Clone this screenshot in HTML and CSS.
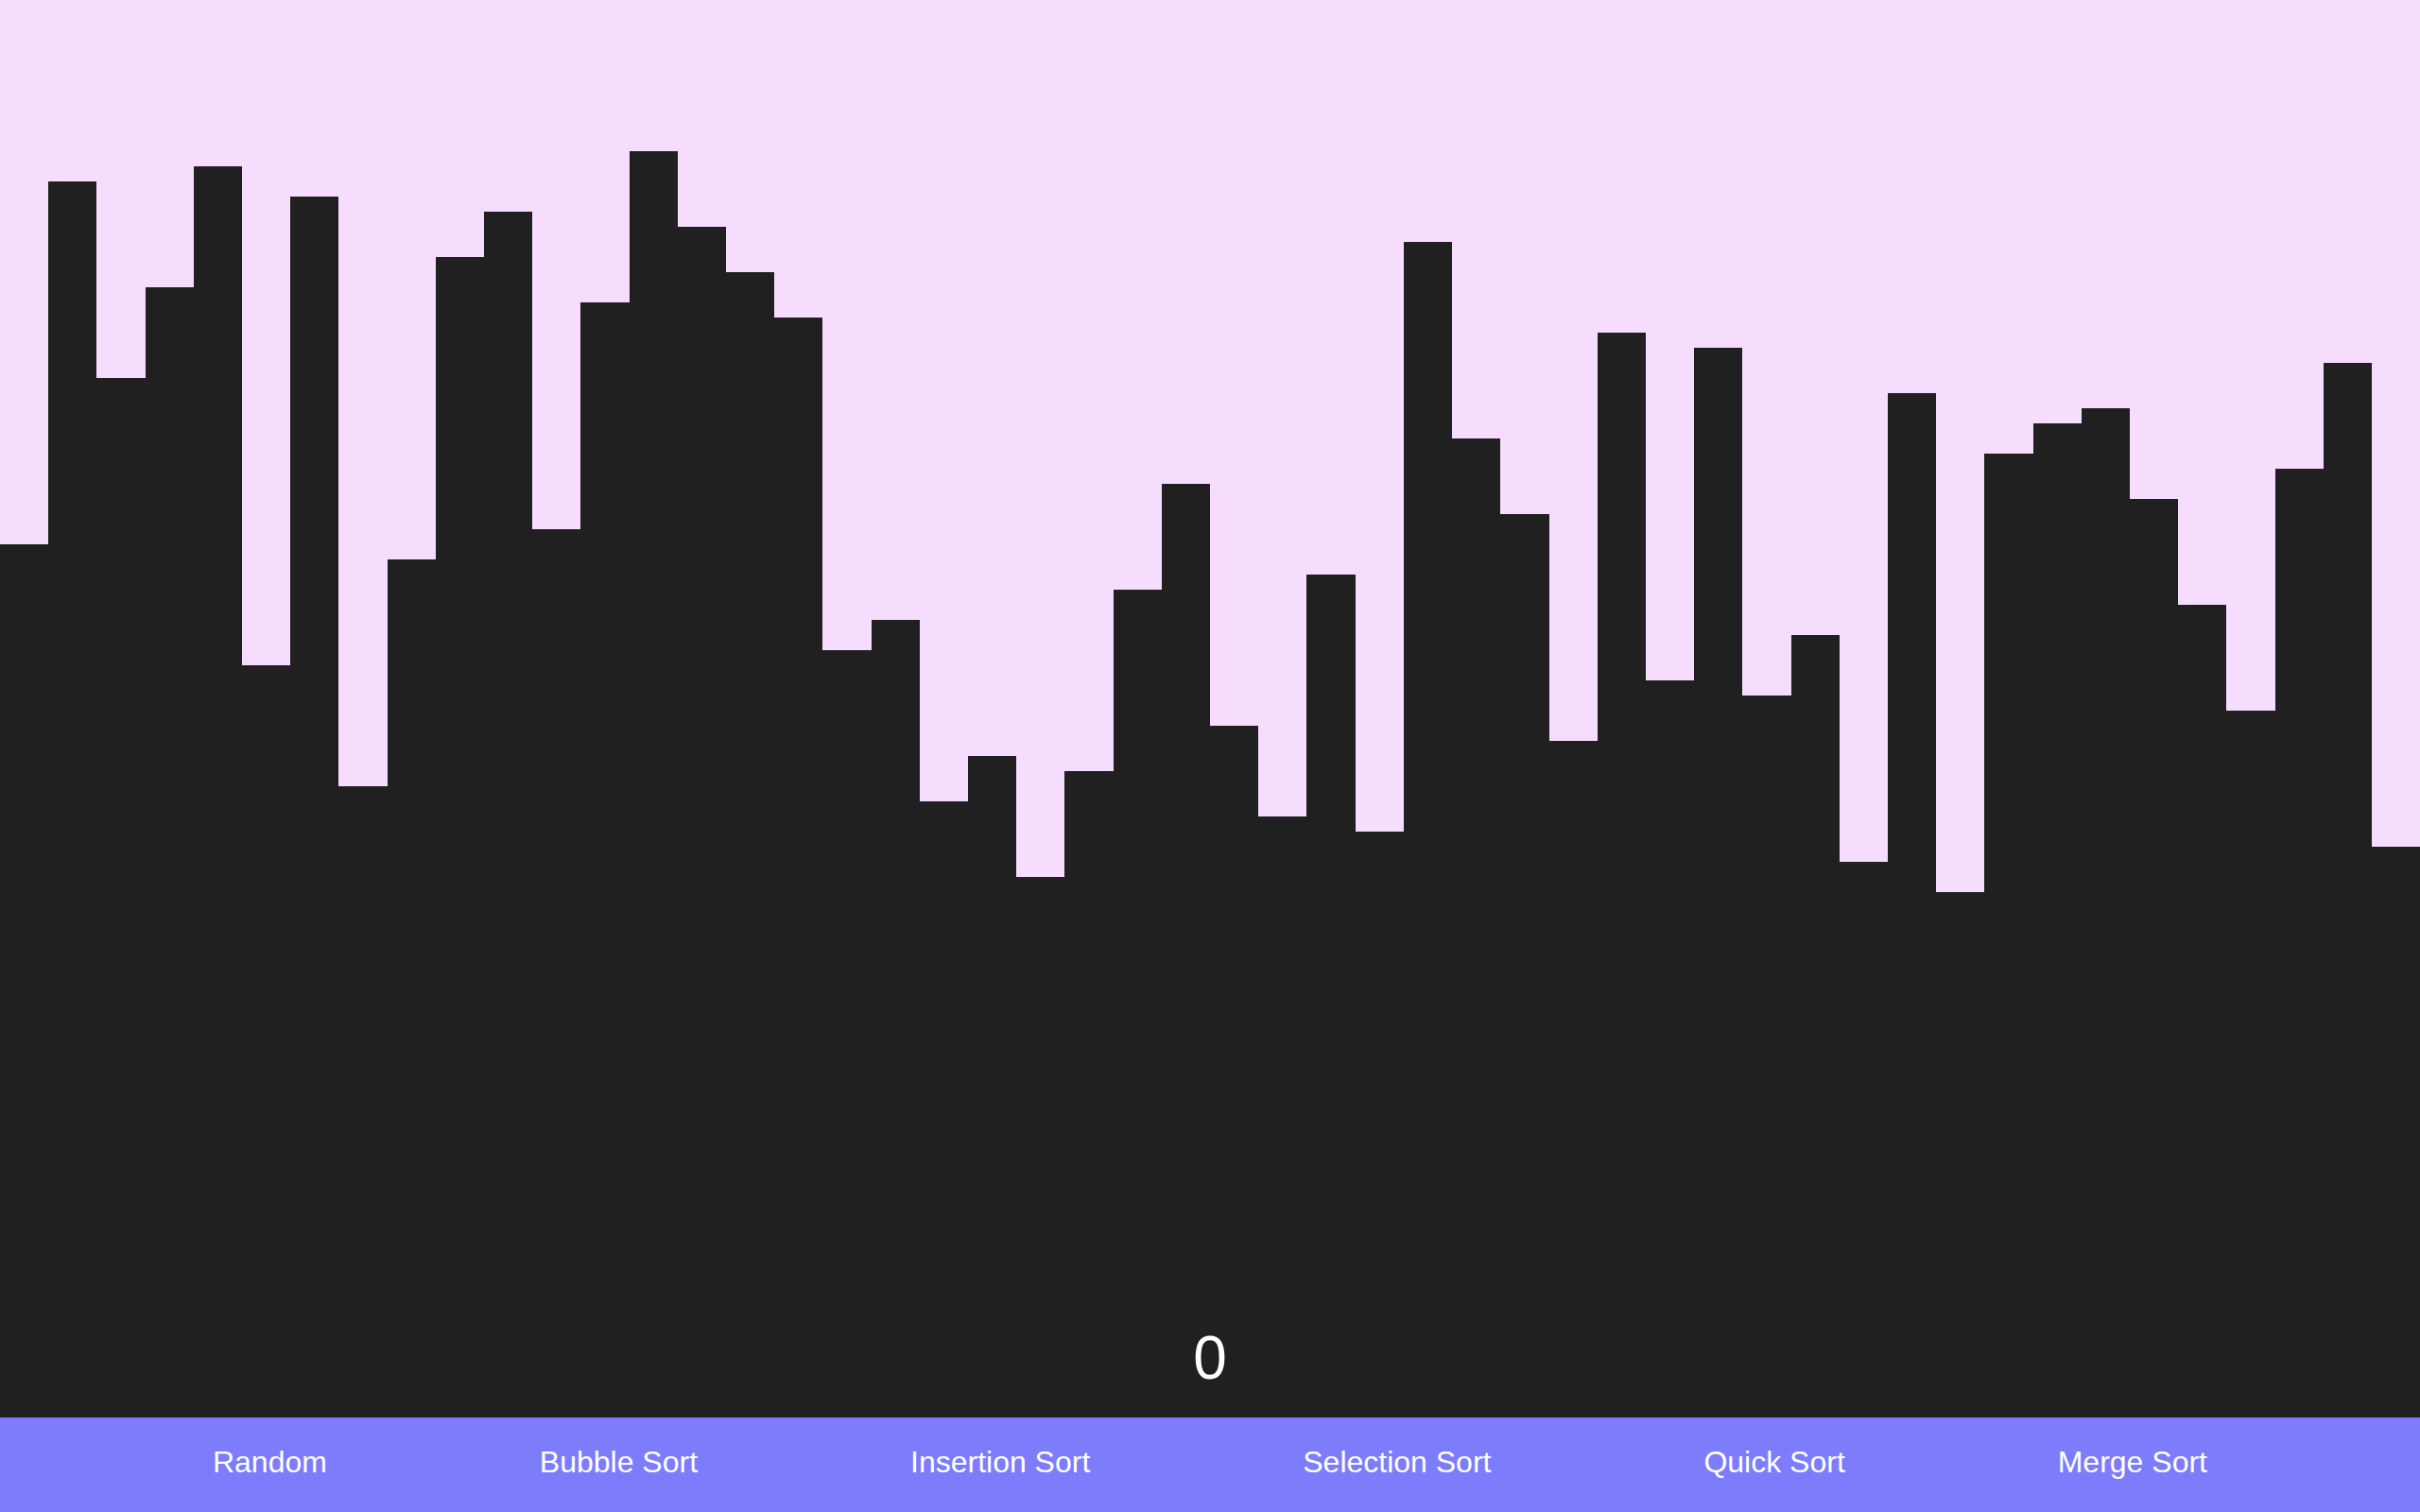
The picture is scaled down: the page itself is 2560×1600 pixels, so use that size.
FILE: index.html
```html
<!DOCTYPE html>
<html lang="en">
<head>
<meta charset="utf-8">
<title>Sorting Visualizer</title>
<link rel="stylesheet" href="styles.css">
</head>
<body>
<div class="app">
  <main class="chart">
    <div class="bar" style="height:924px"></div>
    <div class="bar" style="height:1308px"></div>
    <div class="bar" style="height:1100px"></div>
    <div class="bar" style="height:1196px"></div>
    <div class="bar" style="height:1324px"></div>
    <div class="bar" style="height:796px"></div>
    <div class="bar" style="height:1292px"></div>
    <div class="bar" style="height:668px"></div>
    <div class="bar" style="height:908px"></div>
    <div class="bar" style="height:1228px"></div>
    <div class="bar" style="height:1276px"></div>
    <div class="bar" style="height:940px"></div>
    <div class="bar" style="height:1180px"></div>
    <div class="bar" style="height:1340px"></div>
    <div class="bar" style="height:1260px"></div>
    <div class="bar" style="height:1212px"></div>
    <div class="bar" style="height:1164px"></div>
    <div class="bar" style="height:812px"></div>
    <div class="bar" style="height:844px"></div>
    <div class="bar" style="height:652px"></div>
    <div class="bar" style="height:700px"></div>
    <div class="bar" style="height:572px"></div>
    <div class="bar" style="height:684px"></div>
    <div class="bar" style="height:876px"></div>
    <div class="bar" style="height:988px"></div>
    <div class="bar" style="height:732px"></div>
    <div class="bar" style="height:636px"></div>
    <div class="bar" style="height:892px"></div>
    <div class="bar" style="height:620px"></div>
    <div class="bar" style="height:1244px"></div>
    <div class="bar" style="height:1036px"></div>
    <div class="bar" style="height:956px"></div>
    <div class="bar" style="height:716px"></div>
    <div class="bar" style="height:1148px"></div>
    <div class="bar" style="height:780px"></div>
    <div class="bar" style="height:1132px"></div>
    <div class="bar" style="height:764px"></div>
    <div class="bar" style="height:828px"></div>
    <div class="bar" style="height:588px"></div>
    <div class="bar" style="height:1084px"></div>
    <div class="bar" style="height:556px"></div>
    <div class="bar" style="height:1020px"></div>
    <div class="bar" style="height:1052px"></div>
    <div class="bar" style="height:1068px"></div>
    <div class="bar" style="height:972px"></div>
    <div class="bar" style="height:860px"></div>
    <div class="bar" style="height:748px"></div>
    <div class="bar" style="height:1004px"></div>
    <div class="bar" style="height:1116px"></div>
    <div class="bar" style="height:604px"></div>
    <div class="counter">0</div>
  </main>
  <nav class="controls">
    <button class="control">Random</button>
    <button class="control">Bubble Sort</button>
    <button class="control">Insertion Sort</button>
    <button class="control">Selection Sort</button>
    <button class="control">Quick Sort</button>
    <button class="control">Merge Sort</button>
  </nav>
</div>
</body>
</html>
```

FILE: styles.css
```css
html, body {
  margin: 0;
  padding: 0;
}

body {
  font-family: "Liberation Sans", Arial, sans-serif;
  background: #f6ddfd;
  overflow: hidden;
}

.app {
  display: flex;
  flex-direction: column;
  width: 2560px;
  height: 1600px;
}

.chart {
  position: relative;
  flex: 1 1 auto;
  display: flex;
  align-items: flex-end;
  background: #f6ddfd;
}

.bar {
  flex: 1 1 0;
  background: #202020;
}

.counter {
  position: absolute;
  left: 0;
  right: 0;
  bottom: 26px;
  text-align: center;
  color: #ffffff;
  font-size: 64px;
  line-height: 74px;
}

.controls {
  flex: 0 0 100px;
  box-sizing: border-box;
  padding-bottom: 6px;
  display: flex;
  align-items: center;
  justify-content: space-evenly;
  background: #7d7dfb;
}

.control {
  padding: 0;
  margin: 0;
  border: none;
  background: none;
  color: #ffffff;
  font-family: "Liberation Sans", Arial, sans-serif;
  font-size: 32px;
  cursor: pointer;
}
```
